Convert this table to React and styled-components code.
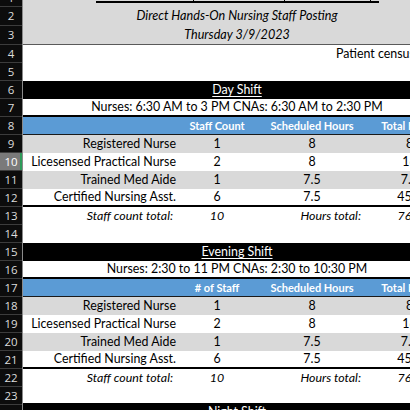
import React from 'react';
import styled, { createGlobalStyle } from 'styled-components';

const GlobalStyle = createGlobalStyle`
  html, body { margin: 0; padding: 0; background: #fff; }
  body { font-family: Lato, "Liberation Sans", sans-serif; overflow: hidden; }
  * { box-sizing: border-box; }
`;

const Sheet = styled.div`
  display: flex;
  align-items: flex-start;
  width: 410px;
  height: 410px;
  overflow: hidden;
  background: #fff;
`;

const HeaderCol = styled.div`
  flex: none;
  width: 23px;
  background: #0c0c0c;
  border-right: 1px solid #8a8a8a;
  display: flex;
  flex-direction: column;
  margin-top: -11px;
`;

const RowNum = styled.div`
  flex: none;
  height: ${p => p.$h}px;
  display: flex;
  align-items: center;
  justify-content: center;
  font-family: "Open Sans", sans-serif;
  font-size: 11.5px;
  line-height: 1;
  color: ${p => (p.$active ? '#ffffff' : '#dcdcdc')};
  background: ${p => (p.$active ? '#7a7a7a' : 'transparent')};
  border-bottom: 1px solid #3c3c3c;
  box-shadow: ${p => (p.$active ? 'inset -2px 0 0 #2e9c5a' : 'none')};
`;

const Body = styled.div`
  flex: none;
  width: 428px;
  display: flex;
  flex-direction: column;
`;

const TopStrip = styled.div`
  flex: none;
  height: 7px;
  background: #d9d9d9;
  padding-left: 73px;
`;

const TopFrame = styled.div`
  width: 283px;
  height: 3px;
  border-bottom: 2px solid #000;
  display: grid;
  grid-template-columns: 98px 91px 86px 8px;
`;

const TopCell = styled.div`
  border-right: ${p => (p.$last ? 'none' : '1px solid #000')};
`;

const Row = styled.div`
  flex: none;
  height: ${p => p.$h || 18}px;
  background: ${p => p.$bg || '#fff'};
  border-bottom: ${p => p.$line || 'none'};
  display: grid;
  grid-template-columns: 155px 78px 112px 83px;
  align-items: center;
  font-size: 12.4px;
  line-height: 1;
  color: #000;
`;

const Banner = styled.div`
  flex: none;
  height: ${p => p.$h || 18}px;
  background: ${p => p.$bg || '#fff'};
  border-bottom: ${p => p.$line || 'none'};
  display: flex;
  align-items: center;
  justify-content: ${p => p.$justify || 'center'};
  padding-left: ${p => p.$indent || 0}px;
  font-size: ${p => (p.$italic ? 12.6 : 12.4)}px;
  line-height: 1;
  font-style: ${p => (p.$italic ? 'italic' : 'normal')};
  color: ${p => p.$color || '#000'};
  white-space: nowrap;
`;

const ShiftTitle = styled.span`
  color: #fff;
  text-decoration: underline;
  text-underline-offset: 2px;
`;

const Cell = styled.div`
  text-align: ${p => p.$align || 'center'};
  padding: 0 ${p => p.$pad || 0}px;
  font-style: ${p => (p.$italic ? 'italic' : 'normal')};
  font-weight: ${p => (p.$bold ? 700 : 400)};
  font-size: ${p => (p.$bold ? '11px' : 'inherit')};
  color: ${p => p.$color || 'inherit'};
  white-space: nowrap;
`;

const staffRows = [
  ['Registered Nurse', '1', '8', '8'],
  ['Licesensed Practical Nurse', '2', '8', '16'],
  ['Trained Med Aide', '1', '7.5', '7.5'],
  ['Certified Nursing Asst.', '6', '7.5', '45.0'],
];

function StaffTable({ countLabel }) {
  return (
    <>
      <Row $bg="#5b9bd5" $line="1px solid #1a1a1a">
        <Cell />
        <Cell $bold $color="#fff">{countLabel}</Cell>
        <Cell $bold $color="#fff">Scheduled Hours</Cell>
        <Cell $bold $color="#fff">Total Hours</Cell>
      </Row>
      {staffRows.map((r, i) => (
        <Row
          key={r[0]}
          $bg={i % 2 === 0 ? '#d9d9d9' : '#fff'}
          $line={i === staffRows.length - 1 ? '2px solid #000' : 'none'}
        >
          <Cell $align="right" $pad={2}>{r[0]}</Cell>
          <Cell>{r[1]}</Cell>
          <Cell>{r[2]}</Cell>
          <Cell>{r[3]}</Cell>
        </Row>
      ))}
      <Row>
        <Cell $align="right" $pad={5} $italic>Staff count total:</Cell>
        <Cell $italic>10</Cell>
        <Cell $align="right" $pad={7} $italic>Hours total:</Cell>
        <Cell $italic>76.5</Cell>
      </Row>
    </>
  );
}

const rowHeights = [18, 19, 19, 18, 18, ...Array(19).fill(18)];

export default function App() {
  return (
    <>
      <GlobalStyle />
      <Sheet>
        <HeaderCol>
          {rowHeights.map((h, i) => (
            <RowNum key={i} $h={h} $active={i + 1 === 10}>
              {i + 1}
            </RowNum>
          ))}
        </HeaderCol>
        <Body>
          <TopStrip>
            <TopFrame>
              <TopCell />
              <TopCell />
              <TopCell />
              <TopCell $last />
            </TopFrame>
          </TopStrip>
          <Banner $h={19} $bg="#d9d9d9" $italic>Direct Hands-On Nursing Staff Posting</Banner>
          <Banner $h={19} $bg="#d9d9d9" $italic $line="1px solid #5a5a5a">Thursday 3/9/2023</Banner>
          <Banner $justify="flex-start" $indent={313}>Patient census</Banner>
          <Banner />
          <Banner $bg="#000"><ShiftTitle>Day Shift</ShiftTitle></Banner>
          <Banner $line="2px solid #000">Nurses: 6:30 AM to 3 PM CNAs: 6:30 AM to 2:30 PM</Banner>
          <StaffTable countLabel="Staff Count" />
          <Banner />
          <Banner $bg="#000"><ShiftTitle>Evening Shift</ShiftTitle></Banner>
          <Banner $line="2px solid #000">Nurses: 2:30 to 11 PM CNAs: 2:30 to 10:30 PM</Banner>
          <StaffTable countLabel="# of Staff" />
          <Banner $h={16} />
          <Banner $bg="#000"><ShiftTitle>Night Shift</ShiftTitle></Banner>
        </Body>
      </Sheet>
    </>
  );
}
